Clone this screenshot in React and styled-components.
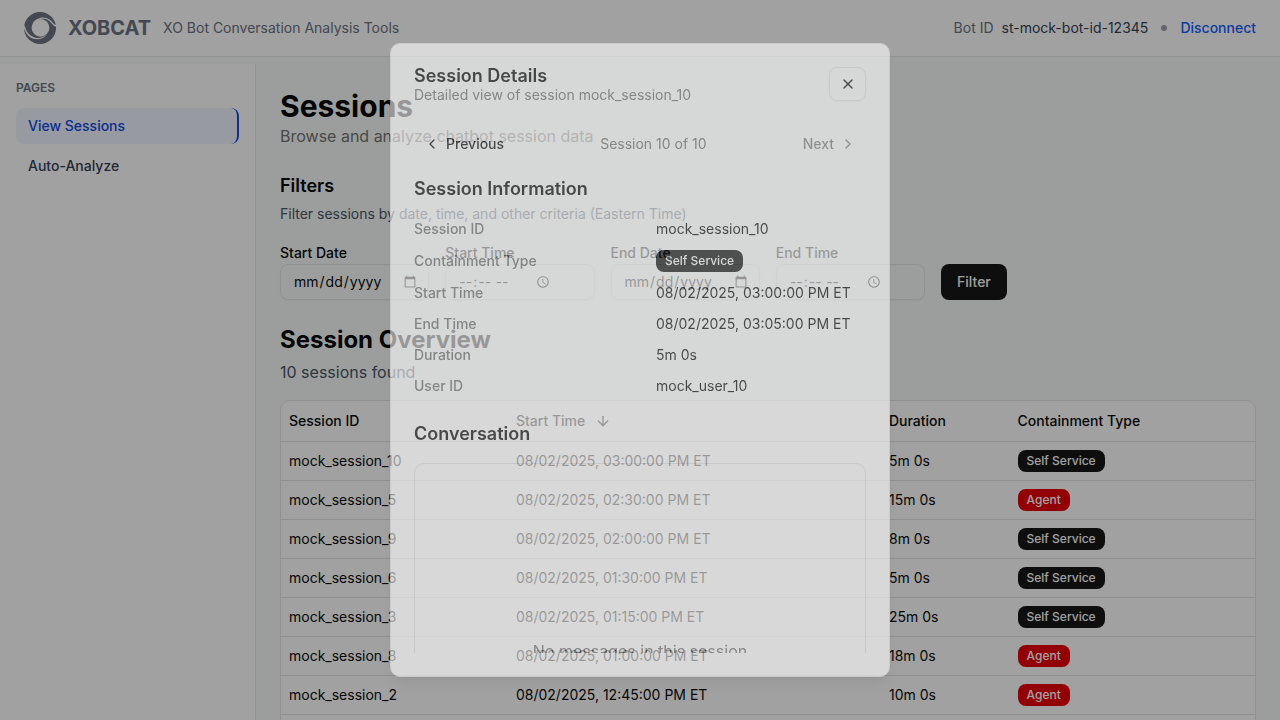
import React from "react";
import styled, { createGlobalStyle } from "styled-components";
import { ArrowDown, ChevronLeft, ChevronRight, X } from "lucide-react";

const Global = createGlobalStyle`
  *, *::before, *::after { box-sizing: border-box; }
  body {
    margin: 0;
    background: #f8fbf9;
    color: #0a0a0a;
    font-family: Inter, "Liberation Sans", sans-serif;
    font-size: 14px;
    line-height: 20px;
  }
  h1, h2, h3, p, dl, dd { margin: 0; }
  button, input { font: inherit; color: inherit; }
`;

const Page = styled.div`
  height: 100vh;
  display: flex;
  flex-direction: column;
  overflow: hidden;
`;
const Header = styled.header`
  flex: none;
  display: flex;
  align-items: center;
  justify-content: space-between;
  height: 57px;
  padding: 0 24px;
  background: #fff;
  border-bottom: 1px solid #e5e7eb;
`;
const Brand = styled.div`
  display: flex;
  align-items: center;
  gap: 12px;
  color: #6a7282;
`;
const BrandName = styled.span`
  font-size: 20px;
  line-height: 28px;
  font-weight: 700;
`;
const Account = styled.div`
  display: flex;
  align-items: center;
  gap: 8px;
  color: #6a7282;
`;
const BotId = styled.span`
  color: #364153;
`;
const Dot = styled.span`
  width: 6px;
  height: 6px;
  margin: 0 5px;
  border-radius: 50%;
  background: #99a1af;
`;
const TextLink = styled.a`
  color: #155dfc;
  font-weight: 500;
  text-decoration: none;
`;

const Body = styled.div`
  flex: 1;
  min-height: 0;
  display: flex;
  padding-top: 7px;
`;
const Sidebar = styled.aside`
  flex: none;
  width: 256px;
  padding: 16px;
  background: #fff;
  border-right: 1px solid #e5e7eb;
`;
const SidebarTitle = styled.h2`
  margin-bottom: 12px;
  color: #6a7282;
  font-size: 12px;
  line-height: 16px;
  font-weight: 600;
`;
const Nav = styled.nav`
  display: flex;
  flex-direction: column;
  gap: 4px;
`;
const NavLink = styled.a`
  padding: 8px 12px;
  border-radius: 8px;
  color: ${(p) => (p.$active ? "#1447e6" : "#364153")};
  background: ${(p) => (p.$active ? "#eff6ff" : "transparent")};
  border-right: ${(p) => (p.$active ? "2px solid #1447e6" : "none")};
  font-weight: 500;
  text-decoration: none;
`;

const Main = styled.main`
  flex: 1;
  min-width: 0;
  padding: 24px;
  overflow: hidden;
`;
const PageTitle = styled.h1`
  font-size: 30px;
  line-height: 36px;
  font-weight: 700;
`;
const Lead = styled.p`
  color: ${(p) => (p.$slate ? "#475569" : "#737373")};
  font-size: 16px;
  line-height: 24px;
`;
const FilterSection = styled.section`
  margin: 24px 0;
`;
const FilterTitle = styled.h2`
  margin-bottom: 4px;
  font-size: 18px;
  line-height: 28px;
  font-weight: 600;
`;
const FilterHint = styled.p`
  margin-bottom: 20px;
  color: #475569;
`;
const FilterForm = styled.form`
  display: flex;
  align-items: flex-end;
  gap: 16px;
`;
const Fields = styled.div`
  flex: 0 1 645px;
  display: flex;
  gap: 16px;
`;
const Field = styled.div`
  flex: 1;
  min-width: 0;
  display: flex;
  flex-direction: column;
  gap: 2px;
`;
const FieldLabel = styled.label`
  font-weight: 500;
  line-height: 18px;
`;
const FieldInput = styled.input`
  display: flex;
  width: 100%;
  height: 36px;
  padding: 4px 12px;
  background: transparent;
  border: 1px solid #e5e5e5;
  border-radius: 8px;
  box-shadow: 0 1px 2px rgba(0, 0, 0, 0.05);
`;
const FilterButton = styled.button`
  height: 36px;
  padding: 0 16px;
  border: 0;
  border-radius: 8px;
  background: #171717;
  color: #fafafa;
  font-weight: 500;
`;
const OverviewTitle = styled.h2`
  margin-bottom: 4px;
  font-size: 24px;
  line-height: 32px;
  font-weight: 700;
`;

const TableFrame = styled.div`
  margin-top: 16px;
  border: 1px solid #e5e5e5;
  border-radius: 10px;
  background: #fff;
  overflow: hidden;
`;
const Table = styled.table`
  width: 100%;
  table-layout: fixed;
  border-collapse: collapse;
`;
const Th = styled.th`
  width: ${(p) => p.$width};
  height: 40px;
  padding: 0 8px;
  border-bottom: 1px solid #e5e5e5;
  font-weight: 500;
  text-align: left;
`;
const Td = styled.td`
  height: 39px;
  padding: 0 8px;
  border-bottom: 1px solid #e5e5e5;
`;
const SortLabel = styled.span`
  display: flex;
  align-items: center;
  gap: 10px;
`;
const Badge = styled.span`
  display: inline-block;
  padding: 3px 9px;
  border-radius: 8px;
  background: ${(p) => (p.$kind === "Agent" ? "#e7000b" : "#171717")};
  color: #fff;
  font-size: 12px;
  line-height: 16px;
  font-weight: 500;
  vertical-align: middle;
`;

const Overlay = styled.div`
  position: fixed;
  inset: 0;
  display: flex;
  align-items: center;
  justify-content: center;
  background: rgba(0, 0, 0, 0.37);
`;
const Dialog = styled.section`
  display: flex;
  flex-direction: column;
  width: 500px;
  max-width: calc(100% - 32px);
  height: 88vh;
  padding: 23px;
  background: #fff;
  border: 1px solid #e5e5e5;
  border-radius: 10px;
  box-shadow: 0 10px 15px -3px rgba(0, 0, 0, 0.1), 0 4px 6px -4px rgba(0, 0, 0, 0.1);
  opacity: 0.585;
`;
const DialogHeader = styled.header`
  display: flex;
  align-items: flex-start;
  justify-content: space-between;
  margin-bottom: 23px;
`;
const DialogTitle = styled.h2`
  font-size: 18px;
  line-height: 18px;
  font-weight: 600;
`;
const Muted = styled.p`
  color: #737373;
`;
const CloseButton = styled.button`
  display: flex;
  align-items: center;
  justify-content: center;
  width: 37px;
  height: 34px;
  padding: 0;
  border: 1px solid #e5e5e5;
  border-radius: 8px;
  background: transparent;
  box-shadow: 0 1px 2px rgba(0, 0, 0, 0.05);
`;
const Pager = styled.div`
  display: flex;
  align-items: center;
  justify-content: space-between;
  height: 32px;
  margin-bottom: 19px;
`;
const PagerButton = styled.button`
  display: flex;
  align-items: center;
  gap: 6px;
  padding: 0 10px;
  border: 0;
  background: transparent;
  font-weight: 500;
  opacity: ${(p) => (p.disabled ? 0.5 : 1)};
`;
const DialogScroll = styled.div`
  flex: 1;
  min-height: 0;
  overflow: hidden;
`;
const SectionTitle = styled.h3`
  font-size: 18px;
  line-height: 20px;
  font-weight: 600;
`;
const Details = styled.dl`
  display: grid;
  gap: 11px;
  margin: 20px 0 28px;
`;
const Detail = styled.div`
  display: grid;
  grid-template-columns: 1fr 1fr;
  align-items: center;
  gap: 32px;
`;
const DetailName = styled.dt`
  color: #737373;
  font-weight: 500;
`;
const Transcript = styled.div`
  height: 375px;
  margin-top: 19px;
  display: flex;
  align-items: center;
  justify-content: center;
  border: 1px solid #e5e5e5;
  border-radius: 10px;
  color: #737373;
  font-size: 16px;
  line-height: 24px;
`;

const sessions = [
  ["mock_session_10", "03:00:00", "5m 0s", "Self Service"],
  ["mock_session_5", "02:30:00", "15m 0s", "Agent"],
  ["mock_session_9", "02:00:00", "8m 0s", "Self Service"],
  ["mock_session_6", "01:30:00", "5m 0s", "Self Service"],
  ["mock_session_3", "01:15:00", "25m 0s", "Self Service"],
  ["mock_session_8", "01:00:00", "18m 0s", "Agent"],
  ["mock_session_2", "12:45:00", "10m 0s", "Agent"],
];

const filters = [
  ["start-date", "Start Date", "date"],
  ["start-time", "Start Time", "time"],
  ["end-date", "End Date", "date"],
  ["end-time", "End Time", "time"],
];

const details = [
  ["Session ID", "mock_session_10"],
  ["Containment Type", <Badge key="type">Self Service</Badge>],
  ["Start Time", "08/02/2025, 03:00:00 PM ET"],
  ["End Time", "08/02/2025, 03:05:00 PM ET"],
  ["Duration", "5m 0s"],
  ["User ID", "mock_user_10"],
];

function Logo() {
  return (
    <svg width="32" height="32" viewBox="0 0 32 32" aria-hidden="true">
      <circle cx="16" cy="16" r="16" fill="#6a7282" />
      <circle cx="16.500" cy="15.800" r="8.900" fill="#fff" />
      <path
        fill="#fff"
        d="M8.500 11.500C12 5.500 20 3.500 25.500 7.500C29 10 30 13.500 32 12.500L32 14.500C29.500 15 28.500 11.500 25 8.800C20 5 13.500 7 8.500 11.500ZM0 13C1.300 14 1.400 18 4.500 21.500C9.500 27 17 27.500 23 22.500C18.500 28.500 9.500 29 4 23.500C1.500 21 0.800 18 0 17Z"
      />
    </svg>
  );
}

export default function App() {
  return (
    <>
      <Global />
      <Page>
        <Header>
          <Brand>
            <Logo />
            <BrandName>XOBCAT</BrandName>
            <span>XO Bot Conversation Analysis Tools</span>
          </Brand>
          <Account>
            <span>Bot ID</span>
            <BotId>st-mock-bot-id-12345</BotId>
            <Dot />
            <TextLink href="#disconnect">Disconnect</TextLink>
          </Account>
        </Header>
        <Body>
          <Sidebar>
            <SidebarTitle>PAGES</SidebarTitle>
            <Nav>
              <NavLink href="#sessions" $active>View Sessions</NavLink>
              <NavLink href="#analyze">Auto-Analyze</NavLink>
            </Nav>
          </Sidebar>
          <Main>
            <PageTitle>Sessions</PageTitle>
            <Lead>Browse and analyze chatbot session data</Lead>
            <FilterSection>
              <FilterTitle>Filters</FilterTitle>
              <FilterHint>Filter sessions by date, time, and other criteria (Eastern Time)</FilterHint>
              <FilterForm>
                <Fields>
                  {filters.map(([id, label, type]) => (
                    <Field key={id}>
                      <FieldLabel htmlFor={id}>{label}</FieldLabel>
                      <FieldInput id={id} type={type} />
                    </Field>
                  ))}
                </Fields>
                <FilterButton type="button">Filter</FilterButton>
              </FilterForm>
            </FilterSection>
            <OverviewTitle>Session Overview</OverviewTitle>
            <Lead $slate>10 sessions found</Lead>
            <TableFrame>
              <Table>
                <thead>
                  <tr>
                    <Th $width="23.3%">Session ID</Th>
                    <Th $width="38.3%">
                      <SortLabel>Start Time <ArrowDown size={16} /></SortLabel>
                    </Th>
                    <Th $width="13.2%">Duration</Th>
                    <Th $width="25.2%">Containment Type</Th>
                  </tr>
                </thead>
                <tbody>
                  {sessions.map(([id, time, duration, kind]) => (
                    <tr key={id}>
                      <Td>{id}</Td>
                      <Td>08/02/2025, {time} PM ET</Td>
                      <Td>{duration}</Td>
                      <Td><Badge $kind={kind}>{kind}</Badge></Td>
                    </tr>
                  ))}
                  <tr>
                    <Td colSpan={4} />
                  </tr>
                </tbody>
              </Table>
            </TableFrame>
          </Main>
        </Body>
      </Page>
      <Overlay>
        <Dialog role="dialog" aria-modal="true" aria-labelledby="dialog-title">
          <DialogHeader>
            <div>
              <DialogTitle id="dialog-title">Session Details</DialogTitle>
              <Muted>Detailed view of session mock_session_10</Muted>
            </div>
            <CloseButton type="button" aria-label="Close"><X size={16} /></CloseButton>
          </DialogHeader>
          <Pager>
            <PagerButton type="button"><ChevronLeft size={16} />Previous</PagerButton>
            <Muted>Session 10 of 10</Muted>
            <PagerButton type="button" disabled>Next<ChevronRight size={16} /></PagerButton>
          </Pager>
          <DialogScroll>
            <SectionTitle>Session Information</SectionTitle>
            <Details>
              {details.map(([name, value]) => (
                <Detail key={name}>
                  <DetailName>{name}</DetailName>
                  <dd>{value}</dd>
                </Detail>
              ))}
            </Details>
            <SectionTitle>Conversation</SectionTitle>
            <Transcript>No messages in this session</Transcript>
          </DialogScroll>
        </Dialog>
      </Overlay>
    </>
  );
}
